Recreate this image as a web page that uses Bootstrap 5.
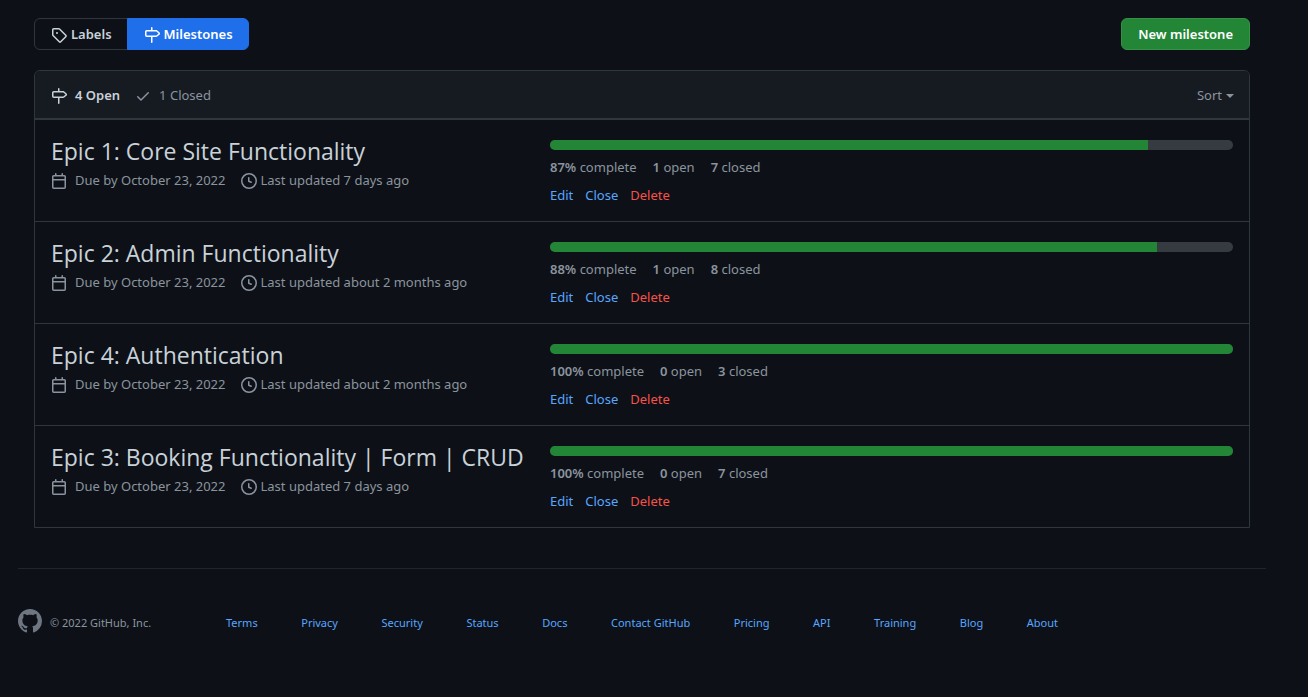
<!DOCTYPE html>
<html lang="en" data-bs-theme="dark">
<head>
<meta charset="utf-8">
<meta name="viewport" content="width=device-width, initial-scale=1">
<title>Milestones</title>
<link href="https://cdn.jsdelivr.net/npm/bootstrap@5.3.0/dist/css/bootstrap.min.css" rel="stylesheet">
<style>
  body { background: #0d1117; color: #8b949e; font-family: "Segoe UI", "Noto Sans", "Open Sans", sans-serif; font-size: 13px; line-height: 20px; }
  a { color: #58a6ff; text-decoration: none; }
  a:hover { text-decoration: underline; }
  svg { fill: currentColor; flex: none; }
  .page-wrap { padding: 18px 42px 0 18px; }
  .subnav .btn, .btn-create { --bs-btn-padding-y: 5px; --bs-btn-padding-x: 16px; --bs-btn-font-size: 13px; --bs-btn-line-height: 20px; --bs-btn-border-radius: 6px; --bs-btn-font-weight: 600; }
  .subnav .btn { gap: 4px; padding-right: 15px; }
  .btn-labels { --bs-btn-color: #c9d1d9; --bs-btn-border-color: #30363d; }
  .btn-milestones { --bs-btn-color: #fff; --bs-btn-bg: #1f6feb; --bs-btn-border-color: #1f6feb; }
  .btn-create { --bs-btn-color: #fff; --bs-btn-bg: #238636; --bs-btn-border-color: #359146; --bs-btn-hover-color: #fff; --bs-btn-hover-bg: #2ea043; }
  .milestone-box { border: 1px solid #30363d; border-radius: 6px 6px 0 0; margin-top: 20px; }
  .box-header { background: #161b22; border-bottom: 1px solid #30363d; border-radius: 6px 6px 0 0; padding: 14px 15px 13px 16px; }
  .states { gap: 15px; }
  .box-header svg, .meta svg, .subnav svg { margin-top: 2px; }
  .milestone-row { border-top: 1px solid #30363d; padding: 16px; }
  .milestone-title { width: 499px; }
  .milestone-title h2 { font-family: "Segoe UI", "Open Sans", sans-serif; font-size: 23px; line-height: 30px; font-weight: 400; color: #c9d1d9; margin: 0; }
  .milestone-title h2 a { color: inherit; }
  .meta { column-gap: 15px; margin-top: 4px; }
  .milestone-stats { flex: 1 1 0; min-width: 260px; padding-top: 4px; }
  .milestone-stats .progress { height: 10px; border-radius: 6px; background: #363b42; }
  .milestone-stats .progress-bar { background: #238636; }
  .counts { gap: 16px; margin-top: 7px; }
  .counts b { font-weight: 600; }
  .row-actions { gap: 12px; margin-top: 8px; }
  .btn-text { background: none; border: 0; padding: 0; color: #58a6ff; }
  .btn-text.danger { color: #f85149; }
  .btn-sort { background: none; border: 0; padding: 0; color: #8b949e; }
  .btn-sort::after { border-top-width: 4px; border-left-width: 4px; border-right-width: 4px; margin-left: 4px; vertical-align: 2px; }
  .bright { color: #c9d1d9; font-weight: 600; }
  .page-footer { border-top: 1px solid #21262d; margin-top: 40px; padding: 40px 0; font-size: 11px; line-height: 18px; }
  .page-footer .octo { color: #6e7681; }
  .page-footer .foot-text { padding-top: 5px; }
  @media (max-width: 991px) { .milestone-title { width: 100%; } }
</style>
</head>
<body>
<svg class="d-none" aria-hidden="true">
  <symbol id="tag" viewBox="0 0 16 16"><path fill-rule="evenodd" d="M2.5 7.775V2.75a.25.25 0 01.25-.25h5.025a.25.25 0 01.177.073l6.25 6.25a.25.25 0 010 .354l-5.025 5.025a.25.25 0 01-.354 0l-6.25-6.25a.25.25 0 01-.073-.177zm-1.5 0V2.75C1 1.784 1.784 1 2.75 1h5.025c.464 0 .91.184 1.238.513l6.25 6.25a1.75 1.75 0 010 2.474l-5.026 5.026a1.75 1.75 0 01-2.474 0l-6.25-6.25A1.75 1.75 0 011 7.775zM6 5a1 1 0 100 2 1 1 0 000-2z"/></symbol>
  <symbol id="milestone" viewBox="0 0 16 16"><path fill-rule="evenodd" d="M7.75 0a.75.75 0 01.75.75V3h3.634c.414 0 .814.147 1.13.414l2.07 1.75a1.75 1.75 0 010 2.672l-2.07 1.75a1.75 1.75 0 01-1.13.414H8.5v5.25a.75.75 0 11-1.5 0V10H2.75A1.75 1.75 0 011 8.25v-3.5C1 3.784 1.784 3 2.75 3H7V.75A.75.75 0 017.75 0zm0 8.5h4.384a.25.25 0 00.161-.06l2.07-1.75a.25.25 0 000-.38l-2.07-1.75a.25.25 0 00-.161-.06H2.75a.25.25 0 00-.25.25v3.5c0 .138.112.25.25.25h5z"/></symbol>
  <symbol id="check" viewBox="0 0 16 16"><path fill-rule="evenodd" d="M13.78 4.22a.75.75 0 010 1.06l-7.25 7.25a.75.75 0 01-1.06 0L2.22 9.28a.75.75 0 011.06-1.06L6 10.94l6.72-6.72a.75.75 0 011.06 0z"/></symbol>
  <symbol id="calendar" viewBox="0 0 16 16"><path fill-rule="evenodd" d="M4.75 0a.75.75 0 01.75.75V2h5V.75a.75.75 0 011.5 0V2h1.25c.966 0 1.75.784 1.75 1.75v10.5A1.75 1.75 0 0113.25 16H2.75A1.75 1.75 0 011 14.25V3.75C1 2.784 1.784 2 2.75 2H4V.75A.75.75 0 014.75 0zm0 3.5h8.5a.25.25 0 01.25.25V6h-11V3.75a.25.25 0 01.25-.25h2zm-2.25 4v6.75c0 .138.112.25.25.25h10.5a.25.25 0 00.25-.25V7.5h-11z"/></symbol>
  <symbol id="clock" viewBox="0 0 16 16"><path fill-rule="evenodd" d="M1.5 8a6.5 6.5 0 1113 0 6.5 6.5 0 01-13 0zM8 0a8 8 0 100 16A8 8 0 008 0zm.5 4.75a.75.75 0 00-1.5 0v3.5a.75.75 0 00.471.696l2.5 1a.75.75 0 00.557-1.392L8.5 7.742V4.75z"/></symbol>
  <symbol id="octocat" viewBox="0 0 16 16"><path fill-rule="evenodd" d="M8 0C3.58 0 0 3.58 0 8c0 3.54 2.29 6.53 5.47 7.59.4.07.55-.17.55-.38 0-.19-.01-.82-.01-1.49-2.01.37-2.53-.49-2.69-.94-.09-.23-.48-.94-.82-1.13-.28-.15-.68-.52-.01-.53.63-.01 1.08.58 1.23.82.72 1.21 1.87.87 2.33.66.07-.52.28-.87.51-1.07-1.78-.2-3.64-.89-3.64-3.95 0-.87.31-1.59.82-2.15-.08-.2-.36-1.02.08-2.12 0 0 .67-.21 2.2.82.64-.18 1.32-.27 2-.27.68 0 1.36.09 2 .27 1.53-1.04 2.2-.82 2.2-.82.44 1.1.16 1.92.08 2.12.51.56.82 1.27.82 2.15 0 3.07-1.87 3.75-3.65 3.95.29.25.54.73.54 1.48 0 1.07-.01 1.93-.01 2.2 0 .21.15.46.55.38A8.013 8.013 0 0016 8c0-4.42-3.58-8-8-8z"/></symbol>
</svg>

<div class="page-wrap">
  <main class="px-3">
    <div class="d-flex justify-content-between">
      <nav class="btn-group subnav" aria-label="Issues">
        <a href="#" class="btn btn-labels d-flex align-items-center"><svg width="16" height="16"><use href="#tag"/></svg>Labels</a>
        <a href="#" class="btn btn-milestones d-flex align-items-center" aria-current="page"><svg width="16" height="16"><use href="#milestone"/></svg>Milestones</a>
      </nav>
      <a href="#" class="btn btn-create">New milestone</a>
    </div>

    <div class="milestone-box">
      <div class="box-header d-flex justify-content-between">
        <div class="d-flex states">
          <a href="#" class="bright d-flex align-items-center gap-2"><svg width="16" height="16"><use href="#milestone"/></svg>4 Open</a>
          <a href="#" class="text-reset d-flex align-items-center gap-2"><svg width="16" height="16"><use href="#check"/></svg>1 Closed</a>
        </div>
        <button type="button" class="btn-sort dropdown-toggle">Sort</button>
      </div>
      <section class="milestone-row d-flex flex-wrap">
        <div class="milestone-title">
          <h2><a href="#">Epic 1: Core Site Functionality</a></h2>
          <div class="d-flex flex-wrap meta"><span class="d-flex align-items-center gap-2"><svg width="16" height="16"><use href="#calendar"/></svg>Due by October 23, 2022</span><span class="d-flex align-items-center gap-1"><svg width="16" height="16"><use href="#clock"/></svg>Last updated 7 days ago</span></div>
        </div>
        <div class="milestone-stats">
          <div class="progress" role="progressbar" aria-label="Epic 1 progress" aria-valuenow="87" aria-valuemin="0" aria-valuemax="100"><div class="progress-bar" style="width:87.5%"></div></div>
          <div class="counts d-flex"><span><b>87%</b> complete</span><span><b>1</b> open</span><span><b>7</b> closed</span></div>
          <div class="row-actions d-flex"><a href="#">Edit</a><button type="button" class="btn-text">Close</button><button type="button" class="btn-text danger">Delete</button></div>
        </div>
      </section>
      <section class="milestone-row d-flex flex-wrap">
        <div class="milestone-title">
          <h2><a href="#">Epic 2: Admin Functionality</a></h2>
          <div class="d-flex flex-wrap meta"><span class="d-flex align-items-center gap-2"><svg width="16" height="16"><use href="#calendar"/></svg>Due by October 23, 2022</span><span class="d-flex align-items-center gap-1"><svg width="16" height="16"><use href="#clock"/></svg>Last updated about 2 months ago</span></div>
        </div>
        <div class="milestone-stats">
          <div class="progress" role="progressbar" aria-label="Epic 2 progress" aria-valuenow="88" aria-valuemin="0" aria-valuemax="100"><div class="progress-bar" style="width:88.9%"></div></div>
          <div class="counts d-flex"><span><b>88%</b> complete</span><span><b>1</b> open</span><span><b>8</b> closed</span></div>
          <div class="row-actions d-flex"><a href="#">Edit</a><button type="button" class="btn-text">Close</button><button type="button" class="btn-text danger">Delete</button></div>
        </div>
      </section>
      <section class="milestone-row d-flex flex-wrap">
        <div class="milestone-title">
          <h2><a href="#">Epic 4: Authentication</a></h2>
          <div class="d-flex flex-wrap meta"><span class="d-flex align-items-center gap-2"><svg width="16" height="16"><use href="#calendar"/></svg>Due by October 23, 2022</span><span class="d-flex align-items-center gap-1"><svg width="16" height="16"><use href="#clock"/></svg>Last updated about 2 months ago</span></div>
        </div>
        <div class="milestone-stats">
          <div class="progress" role="progressbar" aria-label="Epic 4 progress" aria-valuenow="100" aria-valuemin="0" aria-valuemax="100"><div class="progress-bar" style="width:100%"></div></div>
          <div class="counts d-flex"><span><b>100%</b> complete</span><span><b>0</b> open</span><span><b>3</b> closed</span></div>
          <div class="row-actions d-flex"><a href="#">Edit</a><button type="button" class="btn-text">Close</button><button type="button" class="btn-text danger">Delete</button></div>
        </div>
      </section>
      <section class="milestone-row d-flex flex-wrap">
        <div class="milestone-title">
          <h2><a href="#">Epic 3: Booking Functionality | Form | CRUD</a></h2>
          <div class="d-flex flex-wrap meta"><span class="d-flex align-items-center gap-2"><svg width="16" height="16"><use href="#calendar"/></svg>Due by October 23, 2022</span><span class="d-flex align-items-center gap-1"><svg width="16" height="16"><use href="#clock"/></svg>Last updated 7 days ago</span></div>
        </div>
        <div class="milestone-stats">
          <div class="progress" role="progressbar" aria-label="Epic 3 progress" aria-valuenow="100" aria-valuemin="0" aria-valuemax="100"><div class="progress-bar" style="width:100%"></div></div>
          <div class="counts d-flex"><span><b>100%</b> complete</span><span><b>0</b> open</span><span><b>7</b> closed</span></div>
          <div class="row-actions d-flex"><a href="#">Edit</a><button type="button" class="btn-text">Close</button><button type="button" class="btn-text danger">Delete</button></div>
        </div>
      </section>
    </div>
  </main>

  <footer class="page-footer">
    <div class="row g-0">
      <div class="col-12 col-lg-2 d-flex gap-2"><svg class="octo" width="24" height="24"><use href="#octocat"/></svg><span class="foot-text">© 2022 GitHub, Inc.</span></div>
      <nav class="col-12 col-lg-8 d-flex flex-wrap justify-content-between foot-text" aria-label="Footer">
        <a href="#">Terms</a><a href="#">Privacy</a><a href="#">Security</a><a href="#">Status</a><a href="#">Docs</a><a href="#">Contact GitHub</a><a href="#">Pricing</a><a href="#">API</a><a href="#">Training</a><a href="#">Blog</a><a href="#">About</a>
      </nav>
    </div>
  </footer>
</div>
<script src="https://cdn.jsdelivr.net/npm/bootstrap@5.3.0/dist/js/bootstrap.bundle.min.js"></script>
</body>
</html>
